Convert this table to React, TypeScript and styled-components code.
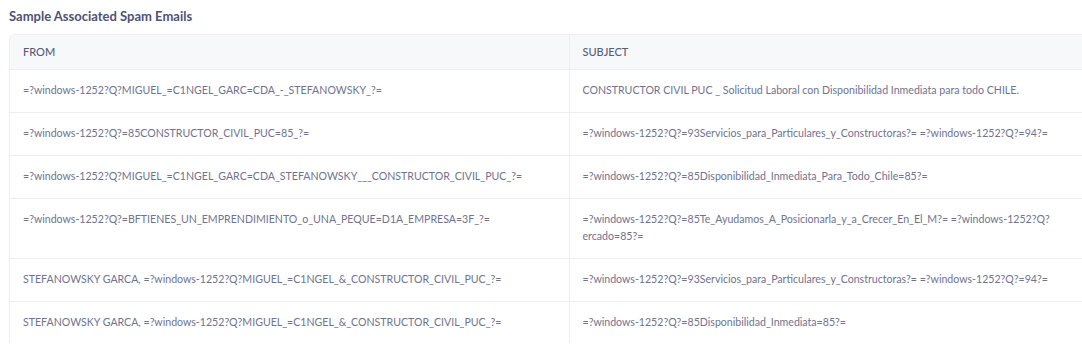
import React from 'react';
import styled, { createGlobalStyle } from 'styled-components';

const GlobalStyle = createGlobalStyle`
  html, body {
    margin: 0;
    padding: 0;
    background: #ffffff;
    overflow: hidden;
  }
  body {
    font-family: Lato, "Noto Sans", sans-serif;
  }
`;

const Page = styled.div`
  padding: 8px 0 0 9px;
  width: 1200px;
`;

const Title = styled.h3`
  margin: 0 0 10px 0;
  font-size: 13px;
  line-height: 16px;
  font-weight: 700;
  color: #4f5178;
`;

const TableWrap = styled.div`
  width: 1079px;
  height: 308px;
  overflow: hidden;
  border: 1px solid #eceef3;
  border-bottom: none;
  border-radius: 6px 6px 0 0;
`;

const Table = styled.table`
  width: 100%;
  border-collapse: collapse;
  table-layout: fixed;
`;

const Col = styled.col<{ $width: number }>`
  width: ${({ $width }) => $width}px;
`;

const HeadCell = styled.th`
  background: #f7f8fa;
  color: #585b7e;
  font-size: 11px;
  font-weight: 500;
  text-align: left;
  text-transform: uppercase;
  line-height: 17px;
  padding: 8px 13px 9px 13px;
  border-bottom: 1px solid #eceef3;

  & + & {
    border-left: 1px solid #eceef3;
  }
`;

const Row = styled.tr`
  border-bottom: 1px solid #eceef3;
`;

const Cell = styled.td`
  vertical-align: top;
  color: #6f7292;
  font-size: 10.6px;
  line-height: 17px;
  padding: 12px 13px 13px 13px;

  & + & {
    border-left: 1px solid #eceef3;
  }
`;

const emails = [
  {
    from: '=?windows-1252?Q?MIGUEL_=C1NGEL_GARC=CDA_-_STEFANOWSKY_?=',
    subject:
      'CONSTRUCTOR CIVIL PUC _ Solicitud Laboral con Disponibilidad Inmediata para todo CHILE.',
  },
  {
    from: '=?windows-1252?Q?=85CONSTRUCTOR_CIVIL_PUC=85_?=',
    subject:
      '=?windows-1252?Q?=93Servicios_para_Particulares_y_Constructoras?= =?windows-1252?Q?=94?=',
  },
  {
    from: '=?windows-1252?Q?MIGUEL_=C1NGEL_GARC=CDA_STEFANOWSKY___CONSTRUCTOR_CIVIL_PUC_?=',
    subject: '=?windows-1252?Q?=85Disponibilidad_Inmediata_Para_Todo_Chile=85?=',
  },
  {
    from: '=?windows-1252?Q?=BFTIENES_UN_EMPRENDIMIENTO_o_UNA_PEQUE=D1A_EMPRESA=3F_?=',
    subject:
      '=?windows-1252?Q?=85Te_Ayudamos_A_Posicionarla_y_a_Crecer_En_El_M?= =?windows-1252?Q?ercado=85?=',
  },
  {
    from: 'STEFANOWSKY GARCA, =?windows-1252?Q?MIGUEL_=C1NGEL_&_CONSTRUCTOR_CIVIL_PUC_?=',
    subject:
      '=?windows-1252?Q?=93Servicios_para_Particulares_y_Constructoras?= =?windows-1252?Q?=94?=',
  },
  {
    from: 'STEFANOWSKY GARCA, =?windows-1252?Q?MIGUEL_=C1NGEL_&_CONSTRUCTOR_CIVIL_PUC_?=',
    subject: '=?windows-1252?Q?=85Disponibilidad_Inmediata=85?=',
  },
];

const App: React.FunctionComponent = () => (
  <>
    <GlobalStyle />
    <Page>
      <Title>Sample Associated Spam Emails</Title>
      <TableWrap>
        <Table>
          <colgroup>
            <Col $width={559} />
            <Col $width={520} />
          </colgroup>
          <thead>
            <tr>
              <HeadCell>From</HeadCell>
              <HeadCell>Subject</HeadCell>
            </tr>
          </thead>
          <tbody>
            {emails.map((email, i) => (
              <Row key={i}>
                <Cell>{email.from}</Cell>
                <Cell>{email.subject}</Cell>
              </Row>
            ))}
          </tbody>
        </Table>
      </TableWrap>
    </Page>
  </>
);

export default App;
